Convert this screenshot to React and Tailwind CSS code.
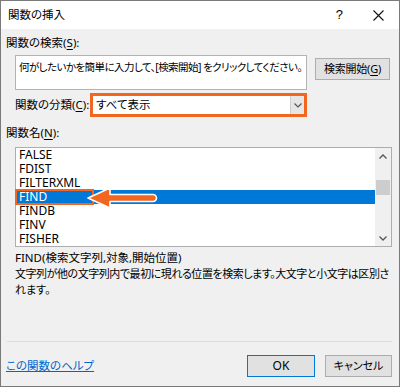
import React from "react";

const items = ["FALSE", "FDIST", "FILTERXML", "FIND", "FINDB", "FINV", "FISHER"];

function U({ children }) {
  return <span className="underline underline-offset-2">{children}</span>;
}

export default function App() {
  return (
    <div className="w-[400px] h-[387px] border border-[#7a7a7a] bg-[#f0f0f0] flex flex-col text-[11px] text-[#000] font-['Noto_Sans','Noto_Sans_CJK_JP',sans-serif] [font-feature-settings:'palt'] leading-[16px] overflow-hidden whitespace-nowrap">
      {/* Title bar */}
      <div className="h-[28px] bg-white flex items-center pl-[7px] pr-[15px] shrink-0">
        <span className="text-[11.5px]">関数の挿入</span>
        <div className="ml-auto flex items-center gap-[30px]">
          <span className="text-[13px] font-['Liberation_Sans',sans-serif]">?</span>
          <svg width="11" height="11" viewBox="0 0 11 11" className="mt-[1px]">
            <path d="M0.5 0.5 L10.5 10.5 M10.5 0.5 L0.5 10.5" stroke="#111" strokeWidth="1.1" fill="none" />
          </svg>
        </div>
      </div>

      {/* Body */}
      <div className="flex-1 flex flex-col pl-[5px] pr-[7px]">
        <div className="mt-[6px] h-[16px] text-[11.5px]">
          関数の検索(<U>S</U>):
        </div>

        <div className="mt-[4px] ml-[9px] flex gap-[8px]">
          <div className="w-[292px] h-[35px] bg-white border border-[#b4b4b4] px-[3px] pt-[3px] overflow-hidden text-[10.5px] tracking-[-0.55px]">
            何がしたいかを簡単に入力して、[検索開始] をクリックしてください。
          </div>
          <div className="mt-[3px] w-[75px] h-[22px] bg-[#e1e1e1] border border-[#adadad] flex items-center justify-center tracking-[-0.2px]">
            検索開始(<U>G</U>)
          </div>
        </div>

        <div className="mt-[3px] ml-[9px] w-[292px] flex items-center justify-between">
          <span className="text-[11.5px]">
            関数の分類(<U>C</U>):
          </span>
          <div className="w-[217px] h-[24px] border-[3px] border-[#f2661f] bg-white flex items-center">
            <span className="pl-[3px] text-[11.5px]">すべて表示</span>
            <div className="ml-auto w-[14px] h-full bg-[#e6e6e6] border-l border-[#cfcfcf] flex items-center justify-center">
              <svg width="8" height="5" viewBox="0 0 8 5">
                <path d="M0.5 0.5 L4 4 L7.5 0.5" stroke="#555" strokeWidth="1.2" fill="none" />
              </svg>
            </div>
          </div>
        </div>

        <div className="mt-[8px] h-[16px] text-[11.5px]">
          関数名(<U>N</U>):
        </div>

        <div className="relative mt-[6px] ml-[9px] w-[377px] h-[100px] bg-white border border-[#adadad] flex">
          <div className="flex-1 flex flex-col pl-[1px]">
            {items.map((it) => (
              <div
                key={it}
                className={
                  "h-[14px] leading-[14px] pl-[2px] text-[12px] font-['Noto_Sans',sans-serif] " +
                  (it === "FIND" ? "bg-[#0078d7] text-white" : "")
                }
              >
                {it}
              </div>
            ))}
          </div>
          <div className="w-[16px] h-full bg-[#f0f0f0] flex flex-col items-center relative">
            <div className="h-[16px] flex items-center justify-center">
              <svg width="8" height="5" viewBox="0 0 8 5">
                <path d="M0.5 4.5 L4 1 L7.5 4.5" stroke="#555" strokeWidth="1.3" fill="none" />
              </svg>
            </div>
            <div className="mt-[16px] w-[14px] h-[15px] bg-[#cdcdcd]" />
            <div className="mt-auto h-[16px] flex items-center justify-center">
              <svg width="8" height="5" viewBox="0 0 8 5">
                <path d="M0.5 0.5 L4 4 L7.5 0.5" stroke="#555" strokeWidth="1.3" fill="none" />
              </svg>
            </div>
          </div>

          {/* Annotation: orange box around FIND */}
          <div className="absolute left-[-1px] top-[41px] w-[79px] h-[16px] border-[2px] border-[#f2661f]" />
          {/* Annotation arrow */}
          <svg className="absolute left-[70px] top-[38px]" width="74" height="24" viewBox="0 0 74 24">
            <path
              d="M2 12 L24 2 L24 8.5 L67 8.5 A3.5 3.5 0 0 1 67 15.5 L24 15.5 L24 22 Z"
              fill="#f2661f"
              stroke="#ffffff"
              strokeWidth="1.6"
              strokeLinejoin="round"
            />
          </svg>
        </div>

        <div className="mt-[3px] ml-[9px] leading-[16px]">
          <div className="text-[11.5px]">FIND(検索文字列,対象,開始位置)</div>
          <div className="text-[11px] tracking-[-0.45px]">文字列が他の文字列内で最初に現れる位置を検索します。大文字と小文字は区別さ</div>
          <div className="text-[11px]">れます。</div>
        </div>

        <div className="flex-1" />
        <div className="h-px bg-[#dcdcdc] ml-[1px]" />
        <div className="pt-[13px] pb-[9px] flex items-center">
          <a className="text-[#0066cc] underline underline-offset-1 cursor-pointer text-[11.5px]">この関数のヘルプ</a>
          <div className="ml-auto flex gap-[10px]">
            <div className="w-[68px] h-[22px] bg-[#e1e1e1] border border-[#0078d7] flex items-center justify-center text-[12px]">
              OK
            </div>
            <div className="w-[67px] h-[22px] bg-[#e1e1e1] border border-[#adadad] flex items-center justify-center">
              キャンセル
            </div>
          </div>
        </div>
      </div>
    </div>
  );
}
